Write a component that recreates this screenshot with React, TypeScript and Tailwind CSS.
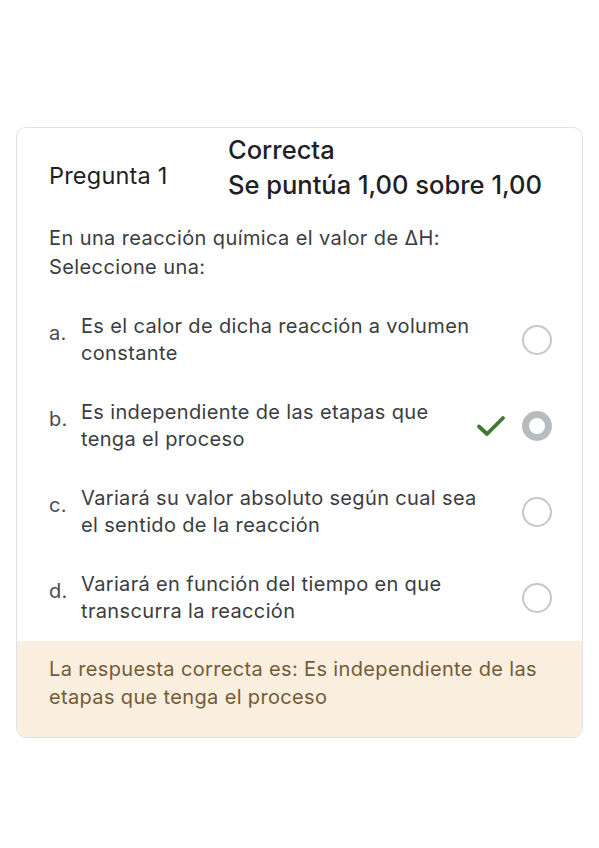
const options = [
  { letter: 'a.', text: 'Es el calor de dicha reacción a volumen constante', checked: false },
  { letter: 'b.', text: 'Es independiente de las etapas que tenga el proceso', checked: true },
  { letter: 'c.', text: 'Variará su valor absoluto según cual sea el sentido de la reacción', checked: false },
  { letter: 'd.', text: 'Variará en función del tiempo en que transcurra la reacción', checked: false },
];

function Radio({ checked }: { checked: boolean }) {
  if (checked) {
    return <div className="w-[30px] h-[30px] rounded-full border-[7px] border-[#b9bcbe] bg-white" />;
  }
  return <div className="w-[30px] h-[30px] rounded-full border-2 border-[#c4c6c8] bg-white" />;
}

function Check() {
  return (
    <svg width="30" height="24" viewBox="0 0 30 24" fill="none">
      <path d="M3 12.5 L11 20 L27 4" stroke="#3c7a30" strokeWidth="3.8" strokeLinecap="round" strokeLinejoin="round" />
    </svg>
  );
}

export default function App() {
  return (
    <div className="min-h-[848px] bg-white pt-[127px] px-4 font-['Inter',sans-serif]">
      <div className="rounded-[10px] border border-[#dee2e6] overflow-hidden">
        {/* Cabecera */}
        <div className="flex pt-[6px] pl-8 pr-4">
          <div className="w-[179px] pt-[28px] text-[23.5px] tracking-[0.2px] leading-[28px] text-[#1d2125]">Pregunta 1</div>
          <div className="text-[#1d2125]">
            <div className="text-[25.5px] leading-[32px] font-medium">Correcta</div>
            <div className="text-[25.5px] leading-[38px] font-medium">Se puntúa 1,00 sobre 1,00</div>
          </div>
        </div>

        {/* Pregunta */}
        <div className="pl-8 pr-8 pt-[20px] text-[20px] tracking-[0.4px] leading-[29px] text-[#3a3d40]">
          <p>En una reacción química el valor de ΔH:</p>
          <p>Seleccione una:</p>
        </div>

        <div className="pl-8 pr-[30px] pt-[31px] pb-[16px] flex flex-col gap-[32px]">
          {options.map((o) => (
            <div key={o.letter} className="flex items-center">
              <div className="flex flex-1 text-[20px] tracking-[0.35px] leading-[27px] text-[#3a3d40]">
                <span className="w-8 shrink-0 pt-[7px] text-[#4a4d50]">{o.letter}</span>
                <span className="max-w-[402px]">{o.text}</span>
              </div>
              <div className="flex items-center gap-[16px]">
                {o.checked && <Check />}
                <Radio checked={o.checked} />
              </div>
            </div>
          ))}
        </div>

        {/* Retroalimentación */}
        <div className="bg-[#faeedf] pl-8 pr-8 pt-[14px] pb-[26px] text-[20px] tracking-[0.35px] leading-[28px] text-[#745b36]">
          La respuesta correcta es: Es independiente de las etapas que tenga el proceso
        </div>
      </div>
    </div>
  );
}
